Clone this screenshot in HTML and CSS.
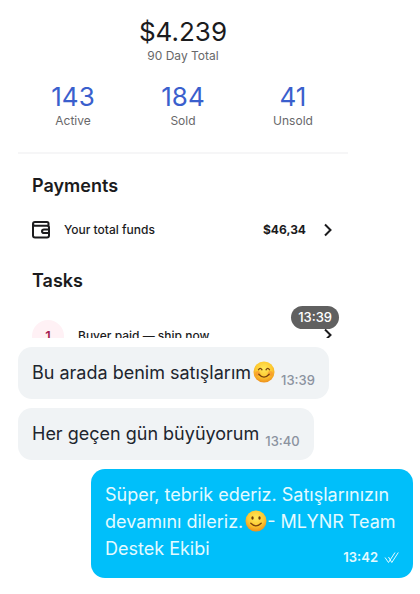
FILE: index.html
```html
<!DOCTYPE html>
<html lang="tr">
<head>
<meta charset="utf-8">
<meta name="viewport" content="width=device-width, initial-scale=1">
<title>Sohbet</title>
<link rel="stylesheet" href="styles.css">
</head>
<body>
<svg class="defs" aria-hidden="true">
  <defs>
    <radialGradient id="face" cx="50%" cy="35%" r="65%">
      <stop offset="0" stop-color="#ffe95c"/>
      <stop offset="0.6" stop-color="#fdc930"/>
      <stop offset="1" stop-color="#ee8f1c"/>
    </radialGradient>
  </defs>
</svg>
<main class="chat">
  <article class="shot">
    <section class="summary">
      <p class="total">$4.239</p>
      <p class="caption">90 Day Total</p>
      <div class="stats">
        <div class="stat"><p class="stat-value">143</p><p class="caption">Active</p></div>
        <div class="stat"><p class="stat-value">184</p><p class="caption">Sold</p></div>
        <div class="stat"><p class="stat-value">41</p><p class="caption">Unsold</p></div>
      </div>
    </section>
    <section class="group">
      <h2>Payments</h2>
      <a class="row" href="#funds">
        <svg class="wallet" viewBox="0 0 18 18" aria-hidden="true"><path d="M16.500 5V2.500Q16.500 1 15 1H3Q1 1 1 3Q1 4.800 3 4.800H15Q17 4.800 17 6.500V14.500Q17 16.500 15 16.500H3Q1 16.500 1 14.500V3M17 8.500H12Q10 8.500 10 10.300Q10 12.100 12 12.100H17"/></svg>
        <span class="row-label">Your total funds</span>
        <span class="amount">$46,34</span>
        <svg class="chevron" viewBox="0 0 8 14" aria-hidden="true"><path d="M1 1.500L6.500 7L1 12.500"/></svg>
      </a>
    </section>
    <section class="group tasks">
      <h2>Tasks</h2>
      <a class="row task-row" href="#ship">
        <span class="count">1</span>
        <span class="row-label">Buyer paid — ship now</span>
        <svg class="chevron" viewBox="0 0 8 14" aria-hidden="true"><path d="M1 1.500L6.500 7L1 12.500"/></svg>
      </a>
    </section>
    <time class="stamp">13:39</time>
  </article>

  <article class="bubble">
    <p>Bu arada benim satışlarım<svg class="emoji" viewBox="0 0 22 22" role="img" aria-label="😊"><circle cx="11" cy="11" r="10.500" fill="url(#face)"/><circle cx="4.800" cy="12.500" r="2.500" fill="#f47b30" opacity=".45"/><circle cx="17.200" cy="12.500" r="2.500" fill="#f47b30" opacity=".45"/><path class="face-line" d="M5.500 8.800Q7.200 5.800 9 8.800M13 8.800Q14.800 5.800 16.500 8.800M5.800 13.200Q11 19 16.200 13.200"/></svg></p>
    <time class="time">13:39</time>
  </article>

  <article class="bubble">
    <p>Her geçen gün büyüyorum</p>
    <time class="time">13:40</time>
  </article>

  <article class="bubble own">
    <p>Süper, tebrik ederiz. Satışlarınızın devamını dileriz.<svg class="emoji" viewBox="0 0 22 22" role="img" aria-label="🙂"><circle cx="11" cy="11" r="10.500" fill="url(#face)"/><ellipse cx="7.500" cy="8" rx="1.200" ry="1.800" fill="#6f3d0c"/><ellipse cx="14.500" cy="8" rx="1.200" ry="1.800" fill="#6f3d0c"/><path class="face-line" d="M5.800 13.200Q11 18.500 16.200 13.200"/></svg>- MLYNR Team Destek Ekibi
      <span class="status">
        <time>13:42</time>
        <svg class="ticks" viewBox="0 0 15 13" role="img" aria-label="Okundu"><path d="M1 6.500L4.500 11.500L11 1.500M4.500 6L7.800 11.500L14.300 1.500"/></svg>
      </span>
    </p>
  </article>
</main>
</body>
</html>
```

FILE: styles.css
```css
* {
  box-sizing: border-box;
}

body,
p,
h2 {
  margin: 0;
}

body {
  background: #fff;
  color: #1b1b1d;
  font-family: Inter, "Liberation Sans", sans-serif;
}

.defs {
  position: absolute;
  width: 0;
  height: 0;
}

.chat {
  display: flex;
  flex-direction: column;
  align-items: flex-start;
  gap: 9px;
  padding: 0 7px 16px 18px;
}

.shot {
  position: relative;
  align-self: stretch;
  margin-right: 65px;
}

.summary {
  padding: 15px 0 23px;
  border-bottom: 2px solid #f6f6f7;
  text-align: center;
}

.total {
  font-size: 26px;
  line-height: 33px;
}

.caption {
  color: #68686a;
  font-size: 12px;
  line-height: 16px;
}

.stats {
  display: grid;
  grid-template-columns: repeat(3, 1fr);
  margin-top: 17px;
}

.stat-value {
  color: #3a5fcd;
  font-size: 26px;
  line-height: 32px;
}

.group {
  padding: 20px 14px 0;
}

h2 {
  font-size: 18px;
  font-weight: 600;
  line-height: 24px;
}

.row {
  display: flex;
  align-items: center;
  margin-top: 20px;
  color: inherit;
  font-size: 12px;
  font-weight: 500;
  line-height: 24px;
  text-decoration: none;
}

.row-label {
  flex: 1;
}

.wallet,
.chevron {
  flex: none;
  fill: none;
  stroke: #1b1b1d;
  stroke-width: 2;
}

.wallet {
  width: 18px;
  height: 18px;
  margin-right: 14px;
}

.amount {
  font-weight: 700;
}

.chevron {
  width: 8px;
  height: 14px;
  margin: 0 2px 0 18px;
}

.tasks {
  padding-top: 27px;
}

.task-row {
  align-items: flex-start;
  height: 18px;
  margin-top: 27px;
  overflow: hidden;
  line-height: 32px;
}

.task-row .chevron {
  margin-top: 8px;
}

.count {
  width: 32px;
  height: 32px;
  margin-right: 14px;
  border-radius: 50%;
  background: #fff1f5;
  color: #a51c50;
  font-size: 13px;
  font-weight: 600;
  text-align: center;
}

.stamp {
  position: absolute;
  right: 9px;
  bottom: 9px;
  padding: 0 7px;
  border-radius: 12px;
  background: #606060;
  color: #fff;
  font-size: 13px;
  font-weight: 500;
  line-height: 23px;
}

.bubble {
  display: flex;
  align-items: flex-end;
  gap: 6px;
  padding: 12px 14px;
  border-radius: 14px;
  background: #f0f3f5;
  color: #20252e;
  font-size: 18px;
  line-height: 28px;
}

.emoji {
  width: 22px;
  height: 22px;
  margin-left: 2px;
  vertical-align: -4px;
}

.face-line {
  fill: none;
  stroke: #7a420d;
  stroke-width: 1.3;
  stroke-linecap: round;
}

.time {
  color: #8b929f;
  font-size: 13px;
  font-weight: 500;
  line-height: 13px;
}

.own {
  display: block;
  align-self: stretch;
  margin-left: 73px;
  background: #00bffa;
  color: #e3faff;
  line-height: 27px;
}

.status {
  float: right;
  display: flex;
  align-items: center;
  gap: 6px;
  margin-top: 14px;
  font-size: 13px;
  font-weight: 600;
  line-height: 17px;
}

.ticks {
  width: 15px;
  height: 13px;
  fill: none;
  stroke: #e3faff;
  stroke-width: 1;
}
```
